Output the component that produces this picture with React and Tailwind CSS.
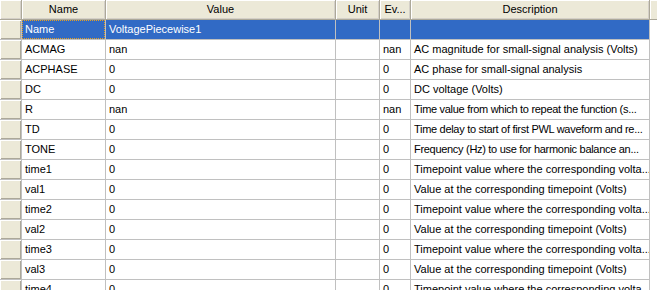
const columns = [
  { label: "", width: "w-[22px]" },
  { label: "Name", width: "w-[84px]" },
  { label: "Value", width: "w-[230px]" },
  { label: "Unit", width: "w-[44px]" },
  { label: "Ev...", width: "w-[31px]" },
  { label: "Description", width: "w-[239px]" },
];

// long descriptions are squeezed a little so they fit the column like the original
const rows = [
  { cells: ["Name", "VoltagePiecewise1", "", "", ""] },
  { cells: ["ACMAG", "nan", "", "nan", "AC magnitude for small-signal analysis (Volts)"] },
  { cells: ["ACPHASE", "0", "", "0", "AC phase for small-signal analysis"] },
  { cells: ["DC", "0", "", "0", "DC voltage (Volts)"] },
  { cells: ["R", "nan", "", "nan", "Time value from which to repeat the function (s..."], tight: true },
  { cells: ["TD", "0", "", "0", "Time delay to start of first PWL waveform and re..."], tight: true },
  { cells: ["TONE", "0", "", "0", "Frequency (Hz) to use for harmonic balance an..."], tight: true },
  { cells: ["time1", "0", "", "0", "Timepoint value where the corresponding volta..."] },
  { cells: ["val1", "0", "", "0", "Value at the corresponding timepoint (Volts)"] },
  { cells: ["time2", "0", "", "0", "Timepoint value where the corresponding volta..."] },
  { cells: ["val2", "0", "", "0", "Value at the corresponding timepoint (Volts)"] },
  { cells: ["time3", "0", "", "0", "Timepoint value where the corresponding volta..."] },
  { cells: ["val3", "0", "", "0", "Value at the corresponding timepoint (Volts)"] },
  { cells: ["time4", "0", "", "0", "Timepoint value where the corresponding volta..."] },
];

const cellWidths = ["w-[84px]", "w-[230px]", "w-[44px]", "w-[31px]", "w-[239px]"];

export default function App() {
  return (
    <div className="h-[290px] w-[657px] overflow-hidden bg-white text-[11px] leading-none text-black [font-family:'Liberation_Sans',Arial,sans-serif]">
      {/* column headers */}
      <div className="flex h-[20px] bg-[#ece9d8]">
        {columns.map((c, i) => (
          <div
            key={i}
            className={`${c.width} flex shrink-0 items-center justify-center border-r border-b border-[#aca899] shadow-[inset_1px_1px_0_#ffffff,inset_-1px_-1px_0_#d4d0c8] pb-[1px]`}
          >
            {c.label}
          </div>
        ))}
        <div className="flex-1 border-b border-[#aca899] shadow-[inset_1px_1px_0_#ffffff]" />
      </div>

      {rows.map((r, ri) => {
        const selected = ri === 0;
        return (
          <div key={ri} className="flex h-[20px]">
            <div className="w-[22px] shrink-0 border-r border-b border-[#c0c0c0] bg-[#ece9d8] shadow-[inset_1px_1px_0_#ffffff,inset_-1px_-1px_0_#aca899]" />
            {r.cells.map((v, ci) => (
              <div
                key={ci}
                className={`${cellWidths[ci]} flex shrink-0 items-center overflow-hidden whitespace-nowrap border-r border-b border-[#c0c0c0] ${
                  selected ? "bg-[#316ac5] text-white" : ""
                }`}
              >
                {selected && ci === 0 ? (
                  <span className="flex h-full w-full items-center border border-dotted border-[#e8a020] pl-[2px]">{v}</span>
                ) : (
                  <span className={`pl-[3px] ${r.tight && ci === 4 ? "tracking-[-0.3px]" : ""}`}>{v}</span>
                )}
              </div>
            ))}
            <div className="flex-1" />
          </div>
        );
      })}
    </div>
  );
}
